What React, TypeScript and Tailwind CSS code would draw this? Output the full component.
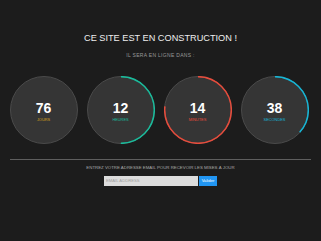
import React from "react";

type Unit = { value: string; label: string; frac: number; color: string; labelClass: string };

const units: Unit[] = [
  { value: "76", label: "JOURS", frac: 0, color: "#d9a21b", labelClass: "text-[#d9a21b]" },
  { value: "12", label: "HEURES", frac: 0.5, color: "#1abc9c", labelClass: "text-[#1abc9c]" },
  { value: "14", label: "MINUTES", frac: 46 / 60, color: "#e74c3c", labelClass: "text-[#e74c3c]" },
  { value: "38", label: "SECONDES", frac: 22 / 60, color: "#16b6d6", labelClass: "text-[#16b6d6]" },
];

function Ring({ u }: { u: Unit }) {
  const r = 33.3;
  const c = 2 * Math.PI * r;
  return (
    <div className="relative w-[68px] h-[68px] rounded-full bg-[#353535] border border-[#4a4a4a] flex flex-col items-center justify-center">
      {u.frac > 0 && (
        <svg className="absolute inset-[-1px]" width="68" height="68" viewBox="0 0 68 68">
          <circle
            cx="34"
            cy="34"
            r={r}
            fill="none"
            stroke={u.color}
            strokeWidth="1.5"
            strokeDasharray={`${u.frac * c} ${c}`}
            transform="rotate(-90 34 34)"
          />
        </svg>
      )}
      <div className="text-white font-bold text-[14px] leading-[14px] mt-[2px]">{u.value}</div>
      <div className={`${u.labelClass} text-[3.9px] leading-[4px] mt-[3px]`}>{u.label}</div>
    </div>
  );
}

export default function App() {
  return (
    <div
      className="w-full h-[241px] bg-[#1c1c1c] flex flex-col items-center overflow-hidden"
      style={{ fontFamily: '"Liberation Sans", Arial, sans-serif' }}
    >
      <div className="pt-[34px] text-[#eeeeee] text-[9.2px] leading-[9px] whitespace-nowrap">
        CE SITE EST EN CONSTRUCTION !
      </div>
      <div className="mt-[10px] text-[#9a9a9a] text-[5px] leading-[5px] tracking-[0.3px] whitespace-nowrap">
        IL SERA EN LIGNE DANS :
      </div>
      <div className="mt-[18px] flex gap-[9px] pr-[3px]">
        {units.map((u) => (
          <Ring key={u.label} u={u} />
        ))}
      </div>
      <div className="mt-[15px] w-[301px] h-px bg-[#5e5e5e]" />
      <div className="mt-[5px] text-[#a8a8a8] text-[4.35px] leading-[5px] whitespace-nowrap">
        ENTREZ VOTRE ADRESSE EMAIL POUR RECEVOIR LES MISES À JOUR
      </div>
      <div className="mt-[5.5px] flex gap-[1px]">
        <div className="w-[94px] h-[10px] bg-[#dcdcdc] flex items-center pl-[2px]">
          <span className="text-[#a0a0a0] text-[4.2px] leading-[5px]">EMAIL ADDRESS</span>
        </div>
        <div className="w-[18px] h-[10px] bg-[#2196f3] flex items-center justify-center">
          <span className="text-white text-[4.2px] leading-[5px]">Valider</span>
        </div>
      </div>
    </div>
  );
}
